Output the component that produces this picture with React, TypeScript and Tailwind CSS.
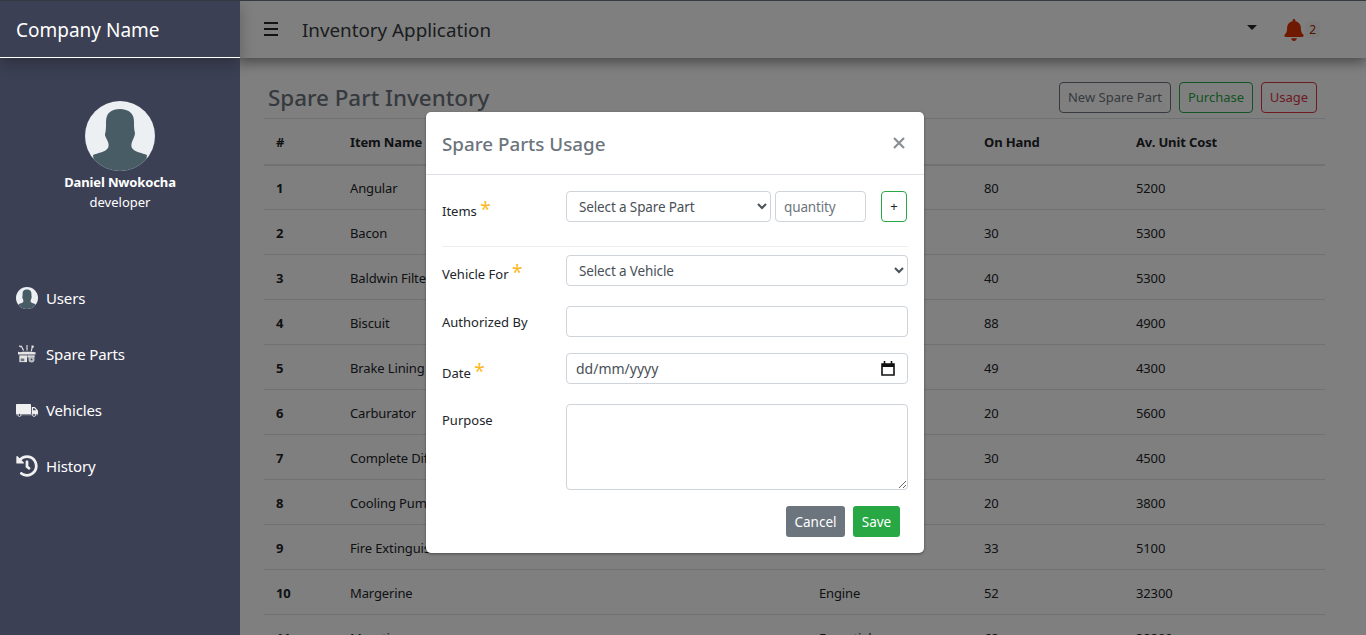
import * as React from 'react';
import { FaBell, FaHistory } from 'react-icons/fa';

const rows = [
    ['1', 'Angular', 'Engine', '80', '5200'],
    ['2', 'Bacon', 'Engine', '30', '5300'],
    ['3', 'Baldwin Filter', 'Engine', '40', '5300'],
    ['4', 'Biscuit', 'Engine', '88', '4900'],
    ['5', 'Brake Lining T', 'Brake', '49', '4300'],
    ['6', 'Carburator', 'Engine', '20', '5600'],
    ['7', 'Complete Diff', 'Engine', '30', '4500'],
    ['8', 'Cooling Pump', 'Engine', '20', '3800'],
    ['9', 'Fire Extinguisher', 'Essential', '33', '5100'],
    ['10', 'Margerine', 'Engine', '52', '32300'],
    ['11', 'Maruti', 'Essential', '62', '38200'],
];

const Avatar = ({ className }: { className: string }) => (
    <svg viewBox="0 0 70 70" className={className}>
        <defs>
            <clipPath id="avatarClip">
                <circle cx="35" cy="35" r="35" />
            </clipPath>
        </defs>
        <circle cx="35" cy="35" r="35" fill="#ecf0f3" />
        <path
            clipPath="url(#avatarClip)"
            d="M35 8c-4 0-8 1-10 3-3 2-4 6-4 10 0 5 0 9-1 12-.5 2 2 5 3 8 1 3 1 6-2 8-2 2-8 3-13 5l2 16h50l2-16c-5-2-11-3-13-5-3-2-3-5-2-8 1-3 3-6 3-9-1-3-1-7-1-11 0-4-1-7-3-9-3-3-7-4-11-4z"
            fill="#485c66"
        />
    </svg>
);

const PartsIcon = () => (
    <svg viewBox="0 0 20 20" className="w-[18px] h-[18px] mr-[10px] ml-[2px]" fill="#e6e6e6">
        <path d="M0 7.5 3 8l2-.5h9.5l5 .5v2.5H0z" />
        <path d="M1.5 11.5h8.5V19H1.5z" />
        <path d="M10.5 11.5h8V14h-8z" />
        <path d="M3 15h4v3H3z" fill="#6f7280" />
        <circle cx="15" cy="16" r="3.4" fill="#b9bbc0" />
        <circle cx="15" cy="16" r="1" fill="#3c4054" />
        <path d="M9.4 0h1.2v6H9.4zM3 1.2 4 .5l2.4 4.6 .2 1.4-1.2-.5zM.8 1.2 2.5 2.8l1-.7L2.3.3z" />
        <path d="M15 3l1.2.4L15.4 7h-1.2zM15 .5h2.2l.4 1.6-1 1.3-1.6-.4z" />
    </svg>
);

const TruckIcon = () => (
    <svg viewBox="0 0 22 13" className="w-[22px] h-[13px] mr-2">
        <rect x="0" y="0" width="15" height="10" rx="0.6" fill="#f0f0f0" />
        <path d="M15.8 3h3l3.2 3.4V10h-6.2z" fill="#f0f0f0" />
        <path d="M17 4.2h1.4l1.7 2H17z" fill="#3c4054" />
        <path d="M0 10.4h22v.8H0z" fill="#b9bbc0" />
        <circle cx="3.5" cy="11" r="1.5" fill="#3c4054" stroke="#f0f0f0" strokeWidth="0.8" />
        <circle cx="18" cy="11" r="1.5" fill="#3c4054" stroke="#f0f0f0" strokeWidth="0.8" />
    </svg>
);

const navItems = [
    { label: 'Users', icon: <Avatar className="w-[22px] h-[22px] mr-2" /> },
    { label: 'Spare Parts', icon: <PartsIcon /> },
    { label: 'Vehicles', icon: <TruckIcon /> },
    { label: 'History', icon: <FaHistory className="w-[22px] h-[22px] mr-2 text-[#f0f0f0]" /> },
];

const Star = () => <span className="text-[#ffb81c] text-[19px] leading-[14px]">*</span>;

const fieldClass =
    'h-[31px] border border-[#ced4da] rounded-[4px] bg-white text-[#495057] text-[13.5px] tracking-[-0.01em] outline-none';

export default function App() {
    return (
        <div className="relative h-screen overflow-hidden flex flex-col bg-white text-[#212529] text-[14px] font-['Noto_Sans',sans-serif]">
            <div className="h-px bg-[#343a40] shrink-0 relative z-30"></div>
            <div className="flex flex-1 min-h-0">
                {/* sidebar sits above the modal backdrop */}
                <aside className="relative z-20 w-[240px] shrink-0 bg-[#3c4054] text-white">
                    <div className="h-[57px] flex items-center pl-4 pt-[2px] border-b border-white text-[19px] shadow-[0_6px_14px_rgba(0,0,0,0.25)]">
                        Company Name
                    </div>
                    <div className="flex flex-col items-center pt-[43px]">
                        <Avatar className="w-[70px] h-[70px]" />
                        <div className="mt-[1px] text-[13px] font-bold leading-[20px] tracking-[-0.01em]">Daniel Nwokocha</div>
                        <div className="text-[13px] leading-[20px]">developer</div>
                    </div>
                    <nav className="pt-[75px] flex flex-col gap-[34px]">
                        {navItems.map((item) => (
                            <div key={item.label} className="h-[22px] pl-4 flex items-center text-[15px] tracking-[-0.01em]">
                                {item.icon}
                                {item.label}
                            </div>
                        ))}
                    </nav>
                </aside>

                <main className="flex-1 min-w-0">
                    <header className="relative h-[57px] flex items-center pl-6 pr-[46px] shadow-[0_4px_12px_rgba(0,0,0,0.45)]">
                        <div className="w-[14px] flex flex-col gap-[4px] -mt-[1px]">
                            <span className="h-[2px] bg-[#212529]"></span>
                            <span className="h-[2px] bg-[#212529]"></span>
                            <span className="h-[2px] bg-[#212529]"></span>
                        </div>
                        <div className="ml-[24px] pt-[2px] text-[18.8px] text-[#343a40]">Inventory Application</div>
                        <div className="ml-auto w-0 h-0 border-x-[5px] border-x-transparent border-t-[5px] border-t-[#212529] mr-[27px] -mt-1"></div>
                        <FaBell className="w-[20px] h-[22px] text-[#dd3300]" />
                        <span className="ml-[1px] px-[4px] rounded bg-[#f8f9fa] text-[#a52a00] text-[12px] leading-[17px] -mt-[1px]">2</span>
                    </header>

                    <div className="pl-6 pr-[41px] pt-[24px]">
                        <div className="flex items-start h-[36px]">
                            <h1 className="pl-1 text-[22.4px] leading-[31px] font-medium text-[#6c757d]">Spare Part Inventory</h1>
                            <div className="ml-auto mr-2 flex gap-2 text-[13px]">
                                <button className="h-[31px] w-[112px] pt-[1px] border border-[#6c757d] rounded-[4px] text-[#6c757d]">New Spare Part</button>
                                <button className="h-[31px] w-[74px] pt-[1px] border border-[#28a745] rounded-[4px] text-[#28a745]">Purchase</button>
                                <button className="h-[31px] w-[56px] pt-[1px] border border-[#dc3545] rounded-[4px] text-[#dc3545]">Usage</button>
                            </div>
                        </div>
                        <table className="w-[1061px] table-fixed border-collapse text-[13px] tracking-[-0.01em]">
                            <colgroup>
                                <col className="w-[74px]" />
                                <col className="w-[469px]" />
                                <col className="w-[165px]" />
                                <col className="w-[152px]" />
                                <col />
                            </colgroup>
                            <thead>
                                <tr className="h-[46px] border-t border-b-2 border-t-[#dee2e6] border-b-[#dee2e6] text-left">
                                    <th className="px-3 pt-[2px] font-bold">#</th>
                                    <th className="px-3 pt-[2px] font-bold">Item Name</th>
                                    <th className="px-3 pt-[2px] font-bold">Category</th>
                                    <th className="px-3 pt-[2px] font-bold">On Hand</th>
                                    <th className="px-3 pt-[2px] font-bold">Av. Unit Cost</th>
                                </tr>
                            </thead>
                            <tbody>
                                {rows.map((r) => (
                                    <tr key={r[0]} className="h-[45px] border-b border-[#dee2e6]">
                                        <td className="px-3 pt-[3px] font-bold">{r[0]}</td>
                                        <td className="px-3 pt-[3px]">{r[1]}</td>
                                        <td className="px-3 pt-[3px]">{r[2]}</td>
                                        <td className="px-3 pt-[3px]">{r[3]}</td>
                                        <td className="px-3 pt-[3px]">{r[4]}</td>
                                    </tr>
                                ))}
                            </tbody>
                        </table>
                    </div>
                </main>
            </div>

            <div className="absolute inset-0 z-10 bg-black/50"></div>

            {/* modal */}
            <div className="absolute z-20 left-[426px] top-[112px] w-[498px] bg-white rounded-[5px] shadow-[0_1px_3px_rgba(0,0,0,0.4)] text-[13px]">
                <div className="h-[63px] flex items-center justify-between pl-4 pr-[19px] border-b border-[#dee2e6]">
                    <div className="pt-[2px] text-[18.8px] font-medium text-[#6c757d]">Spare Parts Usage</div>
                    <svg viewBox="0 0 12 12" className="w-[12px] h-[12px] -mt-[1px]" stroke="#8a8f94" strokeWidth="2.2">
                        <path d="M1 1l10 10M11 1 1 11" />
                    </svg>
                </div>
                <div className="px-4 pt-4 pb-4">
                    <div className="flex items-start">
                        <label className="w-[124px] pt-[10px] leading-[21px]">Items <Star /></label>
                        <select className={`${fieldClass} w-[205px] pl-2`} defaultValue="">
                            <option value="">Select a Spare Part</option>
                        </select>
                        <input className={`${fieldClass} w-[91px] ml-1 px-2 placeholder:text-[#6c757d]`} placeholder="quantity" />
                        <button className="h-[31px] w-[26px] ml-[15px] border border-[#28a745] rounded-[4px] text-[13px]">+</button>
                    </div>
                    <div className="mt-6 mb-2 border-t border-[#eceef0]"></div>
                    <div className="flex items-start mt-2">
                        <label className="w-[124px] pt-[9px] leading-[21px]">Vehicle For <Star /></label>
                        <select className={`${fieldClass} w-[342px] pl-2`} defaultValue="">
                            <option value="">Select a Vehicle</option>
                        </select>
                    </div>
                    <div className="flex items-start mt-5">
                        <label className="w-[124px] pt-[6px] leading-[21px]">Authorized By</label>
                        <input className={`${fieldClass} w-[342px] px-2`} />
                    </div>
                    <div className="flex items-start mt-4">
                        <label className="w-[124px] pt-[10px] leading-[21px]">Date <Star /></label>
                        <div className={`${fieldClass} w-[342px] pl-[9px] pr-[12px] flex items-center justify-between`}>
                            <span className="text-[14px] tracking-normal">dd/mm/yyyy</span>
                            <svg viewBox="0 0 14 15" className="w-[14px] h-[15px]" fill="none" stroke="#111" strokeWidth="1.6">
                                <path d="M1 3h12v11H1z" />
                                <path d="M1 4.5h12" strokeWidth="3" />
                                <path d="M3.5 0v3M10.5 0v3" />
                            </svg>
                        </div>
                    </div>
                    <div className="flex items-start mt-5">
                        <label className="w-[124px] pt-[6px] leading-[21px]">Purpose</label>
                        <textarea className="w-[342px] h-[86px] border border-[#ced4da] rounded-[4px] outline-none"></textarea>
                    </div>
                    <div className="flex justify-end gap-2 mt-4 pr-2 text-[13.5px] text-white">
                        <button className="h-[31px] w-[59px] pt-[1px] rounded-[3px] bg-[#6c757d]">Cancel</button>
                        <button className="h-[31px] w-[47px] pt-[1px] rounded-[3px] bg-[#28a745]">Save</button>
                    </div>
                </div>
            </div>
        </div>
    );
}
